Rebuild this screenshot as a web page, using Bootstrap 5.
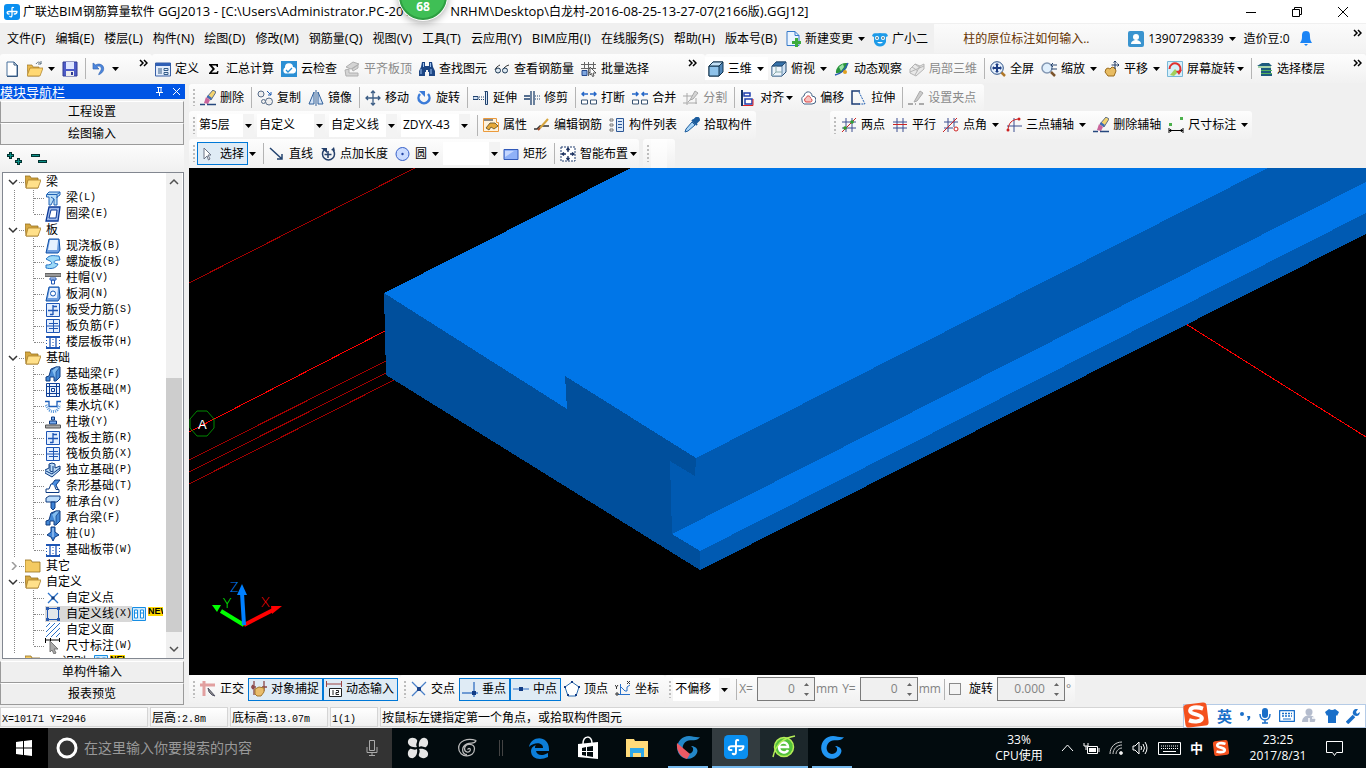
<!DOCTYPE html>
<html lang="zh-CN">
<head>
<meta charset="utf-8">
<meta name="viewport" content="width=device-width, initial-scale=1">
<title>广联达BIM钢筋算量软件 GGJ2013</title>
<link rel="stylesheet" href="https://cdn.jsdelivr.net/npm/bootstrap@5.3.0/dist/css/bootstrap.min.css">
<style>
body{font:12px/16px "Open Sans","Noto Sans CJK SC",sans-serif;color:#000;background:#f0f0f0;overflow:hidden}
button,select,input{font:inherit;color:inherit}
a{color:inherit;text-decoration:none}
.la{font-size:13px}
.ic{width:16px;height:16px;flex:none}
.arr{width:7px;height:4px;flex:none;margin-left:1px}
.arr.tight{margin-left:-2px}
.titlebar{height:23px;background:#fff;padding-left:4px}
.titlebar .ttl{padding-left:3px}
.titlebar .rest{margin-left:32px}
.winbtn{width:46px;border:0;background:none;padding:0}
.menurow{height:31px;padding-left:2px}
.menurow .mi{padding:0 5px}
.menurow .promo{width:188px;padding-left:29px;margin-left:2px;color:#663300;height:29px;background:linear-gradient(#fbfbfb,#f2f2f2)}
.menurow .acct{height:29px;background:linear-gradient(#fbfbfb,#f2f2f2);padding-left:3px}
.toprow{height:29px}
.bar{background:linear-gradient(#fdfdfd,#f1f1f1);border-radius:3px;display:flex;align-items:center;height:100%}
.bar.slim{padding-right:2px}
.tb{display:flex;align-items:center;gap:4px;border:0;background:none;padding:0 4px 0 3px;white-space:nowrap;height:23px;flex:none}
.tb.on{border:1px solid #0078d7;background:#dfebf5;padding:0 3px 0 2px}
.tb:disabled{color:#8a8a8a}
.sep{width:1px;height:21px;background:#b4b4b4;margin:0 2px 0 3px;flex:none}
.grip{width:2px;height:17px;margin:0 2px 0 4px;flex:none;background:repeating-linear-gradient(#bdbdbd 0 2px,transparent 2px 4px)}
.more{width:9px;height:8px;flex:none;margin-top:-12px}
.combo{border:0;border-radius:0;appearance:none;height:23px;padding:0 12px 0 2px;margin-right:4px;background:#fff url("data:image/svg+xml,%3Csvg xmlns='http://www.w3.org/2000/svg' width='11' height='23'%3E%3Cpath fill='%23f3f3f3' d='M0 0h11v23H0z'/%3E%3Cpath d='M2 10h7l-3.500 4z'/%3E%3C/svg%3E") right center no-repeat}
.w-a{width:57px;margin-right:3px}.w-b{width:68px}.w-c{width:69px}
.side{width:185px;flex:none;padding:1px 0 2px}
.side .cap{height:15px;background:#0055e5;color:#fff;font-size:13px;margin-bottom:2px}
.side .tab{height:22px;border:1px solid #9a9a9a;border-top-color:#fff;background:#efefef;width:184px;padding:0;display:block}
.side .tools{height:27px;background:linear-gradient(#fcfcfc,#f0f0f0);padding-left:7px;width:184px}
.treebox{border:1px solid #828790;background:#fff;margin:0 0 2px 2px;width:182px;min-height:0}
.tree,.tree ul{list-style:none;margin:0;padding:0}
.tree{padding-top:1px!important}
.tree li>.r{display:flex;align-items:center;height:16px;white-space:nowrap}
.tree .r .ic{margin-right:5px}
.tree .g>.r{padding-left:5px}
.tree .g>.r::before{content:"";width:5px;border-bottom:1px dotted #888;margin:0 1px 0 0}
.tree ul .r::before{content:"";width:10px;border-bottom:1px dotted #888;margin:0 1px 0 31px}
.tree ul{background:repeating-linear-gradient(#888 0 1px,transparent 1px 2px) 30px 0/1px calc(100% - 8px) no-repeat,repeating-linear-gradient(#888 0 1px,transparent 1px 2px) 11px 0/1px 100% no-repeat}
.chev{width:11px;height:8px;flex:none;order:-1}
.mo{font:10px/16px "Liberation Mono",monospace}
.picked{background:#d8d8d8}
.newtag{font:bold 9px/9px "Liberation Sans",sans-serif;background:#ffd800;height:9px;width:15px;overflow:hidden;margin:-6px 0 0 2px}
.sbar{width:16px;background:#f0f0f0;flex:none;margin-right:1px}
.sbar .thumb{background:#cdcdcd;flex:255}
.work{min-width:0;padding:1px 0 0 4px}
.view{background:#000;min-height:0}
.spin{border:1px solid #7a7a7a;height:24px;width:58px;background:#f0f0f0;color:#808080;margin-right:1px}
.spin.wide{width:68px}
.spin input{border:0;background:none;min-width:0;flex:1;text-align:right;padding:0 4px 0 0;color:#838383}
.spin button{border:0;background:none;padding:0;width:15px;height:10px;display:flex;align-items:center;justify-content:center}
.gt{color:#838383}
.tick{width:12px;height:12px;background-color:#f4f4f4;margin:0 8px 0 2px!important;border-color:#8a8a8a}
.stat{height:21px;gap:2px}
.stat>div{border:1px solid #d5d5d5;background:linear-gradient(#fff,#f0f0f0);padding:2px 1px 0;height:20px;white-space:nowrap}
.stat .s1{width:148px}.stat .s2{width:78px}.stat .s3{width:98px}.stat .s4{width:48px}
.task{height:40px;background:#020b0e;color:#fff}
.task button{border:0;background:none;padding:0;display:flex;align-items:center;justify-content:center;height:40px;color:#fff;flex:none}
.find{width:344px;background:#333;height:40px;padding:0 13px 0 7px}
.find input{background:none;border:0;color:#999;font-size:14px;flex:1;min-width:0;padding:0 5px}
.find input::placeholder{color:#999;opacity:1}
.task .run{border-bottom:2px solid #76b9ed}
.task .cur{background:#333c40}.task .alt{background:#1c272b}
.w40{width:40px}.w44{width:44px}.w46{width:46px}.w48{width:48px}.w52{width:52px}.w54{width:54px}.w64{width:64px}
.tray{gap:9px}
.ball{left:399px;top:-28px;width:48px;height:48px;border-radius:50%;background:#3fbf55;border:2px solid #2e9e42;box-shadow:0 0 0 1px #fff,0 2px 8px #0006;color:#fff;font:bold 12px/16px "Noto Sans",sans-serif;padding-top:25px}
.ime{right:0;bottom:40px;width:183px;height:24px;background:#fff;border:1px solid #b5cbe6}
.ime b{color:#1a6fc9;font-size:15px}
</style>
</head>
<body class="vh-100 d-flex flex-column">
<svg class="d-none" aria-hidden="true">
 <symbol id="dn" viewBox="0 0 7 4"><path d="M0 0h7L3.500 4z"/></symbol>
 <symbol id="mo" viewBox="0 0 9 8"><path d="M1 1l3 3-3 3M5 1l3 3-3 3" fill="none" stroke="#000" stroke-width="1.500"/></symbol>
 <symbol id="app" viewBox="0 0 16 16"><rect width="16" height="16" rx="3" fill="#0a8ff0"/><path d="M9.500 3.500C8 3 8 4 8 5v6c0 1.700-.7 2.200-2.200 1.500M13 7.500H5C2.500 7.500 2.500 10 5 10M13 7.500c0 1.700-1 2.500-2.700 2.500" fill="none" stroke="#fff" stroke-width="1.300" stroke-linecap="round"/></symbol>
 <symbol id="doc" viewBox="0 0 16 16"><path d="M3 1h7l3 3v11H3z" fill="#fff" stroke="#49709c"/><path d="M10 1v3h3M13.500 4v11.500H3" fill="none" stroke="#35577f"/></symbol>
 <symbol id="open" viewBox="0 0 16 16"><path d="M0 4h5l1 2h6v9H1z" fill="#e9b94d" stroke="#9c7426" stroke-width=".7"/><path d="M3 7h13l-3 8H0z" fill="#ffd873" stroke="#a97c22" stroke-width=".7"/><path d="M9 3c2-3 4-2 5 0m0-3v3h-3" fill="none" stroke="#5c7180"/></symbol>
 <symbol id="save" viewBox="0 0 16 16"><path d="M1 1h14v14H1z" fill="#4c5bc7" stroke="#303a92"/><path d="M4 1h8v7H4z" fill="#dfe6ff"/><path d="M4 10h8v5H4z" fill="#ececec"/><path d="M9 11h2v3H9z" fill="#303a92"/></symbol>
 <symbol id="undo" viewBox="0 0 16 16"><path d="M2 2v6h6L5.700 5.700c3-2 6 1 4 4-1 2-2 3-2 4 5-2 6-6 4-9-2-2-5-2-7-.7z" fill="#4d86dd" stroke="#3467b5" stroke-width=".7"/></symbol>
 <symbol id="def" viewBox="0 0 16 16"><path d="M.5 2h15v13H.5z" fill="#e4edfb" stroke="#375fa7"/><path d="M1 2h14v3H1z" fill="#2f5fb5"/><path d="M3 8h4M3 10h4M3 12h4M9 7.500h4v2H9zM9 11.500h4v2H9z" stroke="#355d88" fill="none"/></symbol>
 <symbol id="sum" viewBox="0 0 16 16"><path d="M3 3h9v3h-1l-1-1.500H6L9 8l-3.500 3.500H10.500l1-1.500h1L12 13H3v-1l3.500-4L3 4z"/></symbol>
 <symbol id="cloud" viewBox="0 0 16 16"><path d="M0 0h16v16H0z" fill="#2b8fd4"/><path d="M4 12.500a3.500 3.500 0 010-6 4 4 0 018-.5 3.300 3.300 0 01.5 6.500z" fill="#fff"/><path d="M5 9l2 2 4-4" fill="none" stroke="#2b8fd4" stroke-width="1.300"/></symbol>
 <symbol id="flat" viewBox="0 0 16 16"><path d="M2 6l7-5 6 2-8 5zM1 9l4-1v4h9v3H2zM8 8l6-4v3L9 10z" fill="#d4d4d4" stroke="#b0b0b0"/></symbol>
 <symbol id="bino" viewBox="0 0 16 16"><path d="M3 1h3v4h4V1h3l1 5 2 4v5h-6v-4H9V9H7v2H6v4H0v-5l2-4z" fill="#1d4684"/><path d="M2 8v5M12 8v5M4.500 2v4M11.500 2v4" stroke="#9cc1f0"/></symbol>
 <symbol id="glass" viewBox="0 0 16 16"><path d="M1 9c1-3 3-4 5-5M9 9c1-3 3-4 6-5" stroke="#333" fill="none"/><circle cx="4" cy="9.500" r="2.500" fill="#dde8f0" stroke="#1e3955"/><circle cx="11" cy="9.500" r="2.500" fill="#dde8f0" stroke="#1e3955"/></symbol>
 <symbol id="batch" viewBox="0 0 16 16"><path d="M0 3.500h15M0 7.500h15M7 11.500h3M3.500 1v7M7.500 1v14M12.500 1v6" stroke="#666"/><path d="M1 9.500h5v5H1z" fill="#7fa6de" stroke="#24488c"/><path d="M9 6l6 6h-3l1 3-1.500.5-1-3L9 14z" fill="#fff" stroke="#333" stroke-width=".8"/></symbol>
 <symbol id="cube" viewBox="0 0 16 16"><path d="M1 5l4-4h10v10l-4 4H1z" fill="#4f86b9" stroke="#12344e"/><path d="M1 5h10v10H1z" fill="#8fc3ea" stroke="#12344e"/><path d="M1 5l4-4h10l-4 4z" fill="#c4e1f6" stroke="#12344e"/></symbol>
 <symbol id="top3" viewBox="0 0 16 16"><path d="M1 5l4-4h10v10l-4 4H1z" fill="#cfe1f2" stroke="#254a70"/><path d="M1 5h10v10H1z" fill="#eef5fb" stroke="#6286aa"/><path d="M1 5l4-4h10l-4 4z" fill="#3570a8" stroke="#254a70"/><path d="M5 5v6h6M5 11l-4 4" stroke="#8aa" fill="none"/></symbol>
 <symbol id="orbit" viewBox="0 0 16 16"><path d="M2 12C1 7 7 1 13 2c2 5-4 11-11 10z" fill="#28953c"/><path d="M5 6l4-3 1 3-3 4z" fill="#9be1a5"/><path d="M1 14c5-1 10-5 13-12" stroke="#2b5bb0" stroke-width="1.500" fill="none"/><circle cx="11" cy="11" r="2" fill="#e0a020"/></symbol>
 <symbol id="part3" viewBox="0 0 16 16"><path d="M1 8l5-5 5 2 4-2v5l-8 7-6-3zM6 3l5 4M3 6l6 4M11 5l-5 9M1 11l14-6" fill="#e8e8e8" stroke="#b5b5b5"/></symbol>
 <symbol id="full" viewBox="0 0 16 16"><circle cx="7" cy="7" r="6.300" fill="#e6f0fb" stroke="#294f86"/><path d="M11.500 11.500L15 15" stroke="#b0782a" stroke-width="2.500"/><path d="M7 2l2 2H8v2h2V5l2 2-2 2V8H8v2h1l-2 2-2-2h1V8H4v1L2 7l2-2v1h2V4H5z" fill="#1e3f86"/></symbol>
 <symbol id="zoom" viewBox="0 0 16 16"><circle cx="6" cy="7" r="5" fill="#e0effc" stroke="#8397b2" stroke-width="1.500"/><path d="M10 11l4 4" stroke="#7b542c" stroke-width="2.500"/><path d="M10 4h6M12 2l-2 2 2 2M10 8h6" stroke="#26446e" fill="none"/></symbol>
 <symbol id="pan" viewBox="0 0 16 16"><path d="M2 8l2-1 2 1 2-2 3 1 1 3-2 5H4L1 11z" fill="#e8bc62" stroke="#9c6c1c"/><path d="M11 0v8M7.500 4h7M9.500 1.500L11 0l1.500 1.500M13.500 2.500L15 4l-1.500 1.500" stroke="#223c66" fill="none"/></symbol>
 <symbol id="rot" viewBox="0 0 16 16"><path d="M.5.5h15v15H.5z" fill="#d6f0fb" stroke="#78b8d8"/><path d="M3 14l5-6 3 3-4 4z" fill="#a2cf5b"/><path d="M2.500 8a5.500 5.500 0 1110 3" fill="none" stroke="#e03030" stroke-width="2"/><path d="M15 9l-3 5-3-4z" fill="#e03030"/></symbol>
 <symbol id="floors" viewBox="0 0 16 16"><path d="M0 5l5-3h7l3 3zM4 7h10v2H4zM4 10h10v2H4zM4 13h11v2H4z" fill="#1c5a7e"/><path d="M1 6h13M4 9.500h11M4 12.500h11" stroke="#54b05d"/></symbol>
 <symbol id="newc" viewBox="0 0 16 16"><path d="M2 .5h8l4 4v10H2z" fill="#eaf4ff" stroke="#3579c9"/><path d="M10 .5v4h4" fill="none" stroke="#3579c9"/><path d="M10 7h3v3h3v3h-3v3h-3v-3H7v-3h3z" fill="#3cac3c"/></symbol>
 <symbol id="owl" viewBox="0 0 16 16"><path d="M0 5c1-4 4-2 8-3 4 1 7-1 8 3l-2 1v5c-2 6-10 6-12 0V6z" fill="#1e9be8"/><circle cx="5" cy="7" r="2" fill="#fff"/><circle cx="11" cy="7" r="2" fill="#fff"/><path d="M4 7h2M10 7h2" stroke="#034"/><path d="M5 11c2 2 4 2 6 0z" fill="#fff"/></symbol>
 <symbol id="user" viewBox="0 0 16 16"><rect width="16" height="16" rx="2" fill="#3a94cf"/><circle cx="8" cy="6" r="3" fill="#fff"/><path d="M3 13c0-3 3-4 5-4s5 1 5 4z" fill="#fff"/></symbol>
 <symbol id="bell" viewBox="0 0 16 16"><path d="M8 0c4 0 4 3 4 6s1 4 2 6H2c1-2 2-3 2-6s0-6 4-6z" fill="#1b84f5"/><path d="M6 13h4l-2 2z" fill="#1b84f5"/></symbol>
 <symbol id="erase" viewBox="0 0 16 16"><path d="M7 7l6-7 3 2-5 8z" fill="#f3d36e" stroke="#385078" stroke-width=".8"/><path d="M8 5l4 3-1 2-4-3z" fill="#3d6cb8"/><path d="M6 7l4 3-2 4-4-1z" fill="#c9649b"/><path d="M0 14.500h5M7 14.500h9" stroke="#26477e" stroke-width="1.500"/></symbol>
 <symbol id="copy" viewBox="0 0 16 16"><g fill="#eee" stroke="#556b88"><circle cx="4" cy="4" r="3"/><circle cx="6.500" cy="11.500" r="2"/><circle cx="12" cy="11.500" r="3.500"/></g><path d="M10 1l4 4M14 2v3h-3" stroke="#1c5bb0" fill="none"/></symbol>
 <symbol id="mirror" viewBox="0 0 16 16"><path d="M6 2v12H1zM10 2v12h5z" fill="#d4e3f6" stroke="#31609a"/><path d="M8 0v16" stroke="#31609a"/></symbol>
 <symbol id="move" viewBox="0 0 16 16"><path d="M8 1v14M1 8h14M6 3l2-2 2 2M6 13l2 2 2-2M3 6L1 8l2 2M13 6l2 2-2 2" fill="none" stroke="#3c5d85" stroke-width="1.300"/></symbol>
 <symbol id="turn" viewBox="0 0 16 16"><path d="M4 4a5.500 5.500 0 108 0" fill="none" stroke="#3b7bd8" stroke-width="2.500"/><path d="M3 1h6v6z" fill="#3b7bd8"/></symbol>
 <symbol id="ext" viewBox="0 0 16 16"><path d="M0 6.500h5v3H0z" fill="#d4e3f6" stroke="#20426e"/><path d="M11.500 1.500h3v13h-2V2" fill="#d4e3f6" stroke="#20426e"/><path d="M6 7h6M6 9.500h6" stroke="#20426e" stroke-dasharray="1 1"/></symbol>
 <symbol id="trim" viewBox="0 0 16 16"><path d="M0 6h6M0 9h6M7 1v14M10 1v14" stroke="#20426e" stroke-width="1.300"/><path d="M11 6h5M11 9h5" stroke="#20426e" stroke-dasharray="1 1"/></symbol>
 <symbol id="brk" viewBox="0 0 16 16"><path d="M.5 10h6v4h-6zM9.500 10h6v4h-6z" fill="#fff" stroke="#3b5472"/><path d="M7 4H1m2-2L1 4l2 2M9 4h6m-2-2l2 2-2 2" stroke="#2567c8" stroke-width="1.500" fill="none"/></symbol>
 <symbol id="join" viewBox="0 0 16 16"><path d="M.5 10h6v4h-6zM9.500 10h6v4h-6z" fill="#fff" stroke="#3b5472"/><path d="M0 4h6M4 2l2 2-2 2M16 4h-6m2-2l-2 2 2 2" stroke="#2567c8" stroke-width="1.500" fill="none"/></symbol>
 <symbol id="cut" viewBox="0 0 16 16"><path d="M0 6h9M0 13h14M4 3v12M5 12l8-8M13 8v6" stroke="#aaa" fill="none"/><path d="M12 1l3 2-5 6-3 1z" fill="#d5d5d5" stroke="#aaa"/></symbol>
 <symbol id="align" viewBox="0 0 16 16"><path d="M2 0v16" stroke="#15356a" stroke-width="2"/><path d="M4 3h6v3H4zM5 9h7v5H5z" fill="#fff" stroke="#203fae" stroke-width="1.500"/><path d="M3 15.500h10V9" stroke="#d22" fill="none"/></symbol>
 <symbol id="off" viewBox="0 0 16 16"><path d="M2 10a3 3 0 012-4c1-6 8-5 8 0a4 4 0 010 8H4a4 4 0 01-2-4z" fill="#fff" stroke="#456285"/><path d="M4.500 10c0-2 2-2 2-3 1-2 4-1 4 1 2 1 2 4 0 4h-5z" fill="#f6c4c0" stroke="#d84040"/></symbol>
 <symbol id="stretch" viewBox="0 0 16 16"><path d="M9 1H1v13h8" fill="none" stroke="#1c3c74" stroke-width="1.500"/><path d="M8 2l6 12H8" fill="none" stroke="#1c5bb0" stroke-dasharray="2 1"/></symbol>
 <symbol id="gripset" viewBox="0 0 16 16"><path d="M0 14h5m6 0h5M7 14h1" stroke="#aaa" stroke-width="2"/><path d="M12 1l3 2-6 8-3 1z" fill="#ccc" stroke="#aaa"/></symbol>
 <symbol id="prop" viewBox="0 0 16 16"><path d="M.5 1.500h13v4h2v9H.5z" fill="#fff3dd" stroke="#eb9a3c"/><path d="M1 2h9v2H1z" fill="#888"/><path d="M3 11l4-5h5l3 3-4 3-3-2-2 3z" fill="#e6a93a" stroke="#5c4a20" stroke-width=".8"/></symbol>
 <symbol id="editr" viewBox="0 0 16 16"><path d="M0 12h3l3-3h9" fill="none" stroke="#333" stroke-width="1.500"/><path d="M6 11l8-9" stroke="#d6a53c" stroke-width="2"/><path d="M4 13l2-2" stroke="#a74a25" stroke-width="2"/></symbol>
 <symbol id="list" viewBox="0 0 16 16"><path d="M7.500 1.500h7v13h-7z" fill="#dce9f8" stroke="#2c5797"/><path d="M9 4.500h4M9 7.500h4M9 10.500h4" stroke="#2c5797"/><path d="M1 2h3v2H1zM1 7h3v2H1zM1 12h3v2H1z" fill="none" stroke="#777"/></symbol>
 <symbol id="pick" viewBox="0 0 16 16"><path d="M1 15l1-3 6-7 3 3-7 6z" fill="#a9d5f7" stroke="#1f5f9f"/><path d="M8 3l5 5M9 4l3-3q3-1 3 2l-3 3" fill="#1b5c9d" stroke="#1b5c9d" stroke-width="2"/></symbol>
 <symbol id="ax1" viewBox="0 0 16 16"><path d="M5 1v14M11 1v14M1 5h14M1 11h14" stroke="#3c4f90"/><path d="M1 15L15 1" stroke="#c22"/><circle cx="4" cy="11" r="1.800" fill="#2f9d2f"/><circle cx="11" cy="5" r="1.800" fill="#2f9d2f"/></symbol>
 <symbol id="ax2" viewBox="0 0 16 16"><path d="M5 1v14M11 1v14M1 5h14M1 11h14" stroke="#3c4f90"/><path d="M1 7.500h14" stroke="#c22"/></symbol>
 <symbol id="ax3" viewBox="0 0 16 16"><path d="M5 1v14M11 1v9M1 5h14M1 11h9" stroke="#3c4f90"/><path d="M0 15L14 1" stroke="#c22"/><circle cx="13" cy="12" r="2" fill="#fff" stroke="#c22"/></symbol>
 <symbol id="ax4" viewBox="0 0 16 16"><path d="M8 1v14M1 9h15" stroke="#3c4f90"/><path d="M2 14C2 6 6 2 14 2" fill="none" stroke="#c22"/><circle cx="2" cy="13" r="1.500" fill="#c22"/><circle cx="13" cy="2" r="1.500" fill="#c22"/></symbol>
 <symbol id="dim" viewBox="0 0 16 16"><path d="M1 6h3v3H1zM12 0h3v3h-3z" fill="#4bb04b"/><path d="M1 11v5M15 11v5M1 13.500h14M3 12l-1 1.500L3 15M13 12l1 1.500-1 1.500" stroke="#000" fill="none"/></symbol>
 <symbol id="cur" viewBox="0 0 16 16"><path d="M4 2l7 7H8l2 4-1.500 1L7 10l-3 3z" fill="#fff" stroke="#6c7486"/></symbol>
 <symbol id="line" viewBox="0 0 16 16"><path d="M1 2l12 11M13 8v5H8" stroke="#23436f" stroke-width="1.500" fill="none"/></symbol>
 <symbol id="ptlen" viewBox="0 0 16 16"><path d="M4 4a6 6 0 109 0M8 5v7M4.500 8.500h7" stroke="#25406b" stroke-width="1.500" fill="none"/><path d="M1 2h6v5zM15 5l-4-1 3-3z" fill="#25406b"/></symbol>
 <symbol id="circ" viewBox="0 0 16 16"><circle cx="7.500" cy="8" r="6.500" fill="#cbdcff" stroke="#3660c9"/><circle cx="7.500" cy="8" r="1.200" fill="#2345a5"/></symbol>
 <symbol id="rect" viewBox="0 0 16 16"><path d="M1 3.500h14v10H1z" fill="#8fb1f7" stroke="#3159b9"/><path d="M2 5h9L2 11z" fill="#c5d7ff"/></symbol>
 <symbol id="smart" viewBox="0 0 16 16"><path d="M1 1h14v14H1z" fill="#fff" stroke="#223f70" stroke-dasharray="2 1"/><path d="M8 2v4M6.500 4L8 2l1.500 2M8 10v4M6.500 12L8 14l1.500-2M2 8h4M4 6.500L2 8l2 1.500M10 8h4M12 6.500L14 8l-2 1.500" fill="none" stroke="#1d3260" stroke-width="1.300"/></symbol>
 <symbol id="ortho" viewBox="0 0 16 16"><path d="M4 0v15M0 4h15" stroke="#e2a0a0" stroke-width="3"/><path d="M8 7l7 8-3-1-3-3z" fill="#888" stroke="#556"/></symbol>
 <symbol id="snap" viewBox="0 0 16 16"><path d="M3 0v14M13 0v10M0 6h5M11 6h5M1 4l2 2-2 2" stroke="#8b4848" fill="none" stroke-width="1.300"/><path d="M4 8l4-2 5 1v4l-3 4H6l-2-2z" fill="#e9bd6c" stroke="#a3762c"/></symbol>
 <symbol id="dyn" viewBox="0 0 16 16"><path d="M.5 0v6M15.500 0v6M0 3h16" stroke="#9c4444"/><path d="M3.500 7.500h12v8h-12z" fill="#fff" stroke="#222"/><path d="M7 9v5M10 9.500h2.500v2H10v2h3" stroke="#222" fill="none"/></symbol>
 <symbol id="px" viewBox="0 0 16 16"><path d="M1 1l13 13M15 1L1 15" stroke="#4a80c8" stroke-width="1.300"/><path d="M6 6h4v4H6z" fill="#1c458c"/></symbol>
 <symbol id="pperp" viewBox="0 0 16 16"><path d="M0 12h16M12 1v15" stroke="#4a80c8" stroke-width="1.500"/><path d="M10 10h4v4h-4z" fill="#123c86"/></symbol>
 <symbol id="pmid" viewBox="0 0 16 16"><path d="M0 8h16" stroke="#6b98d4" stroke-width="1.500"/><path d="M6 6h4v4H6z" fill="#123c86"/></symbol>
 <symbol id="pvert" viewBox="0 0 16 16"><path d="M8 1l7 5-3 9H4L1 6z" fill="#fff" stroke="#2a6cb0"/><path d="M7 0h2v2H7zM0 5h2v2H0zM14 5h2v2h-2zM3 13h2v2H3zM11 13h2v2h-2z" fill="#123c86"/></symbol>
 <symbol id="pcoord" viewBox="0 0 16 16"><path d="M5.500 3v11M3 13.500h12M6 6l4 4h2V6l3-2" stroke="#2770ca" fill="none"/><path d="M0 4l1.500 2L3 4M1.500 6v2M12 0l3 3M15 0l-3 3M1 12h2v2H1z" stroke="#333" fill="none"/></symbol>
 <symbol id="fo" viewBox="0 0 16 16"><path d="M0 2h5l1 2h7v10H1z" fill="#d6a840" stroke="#95701f" stroke-width=".8"/><path d="M3 6h13l-3 8H1z" fill="#ffe08a" stroke="#a9802c" stroke-width=".8"/></symbol>
 <symbol id="fc" viewBox="0 0 16 16"><path d="M0 2h6l1 2h8v10H0z" fill="#f4ca62" stroke="#95701f" stroke-width=".8"/></symbol>
 <symbol id="t1" viewBox="0 0 16 16"><path d="M1.500 4.500L4 2h11v3l-3 2v8H9V9l-3 6H4V7H1.500z" fill="#b8dcf7" stroke="#2163b5"/><path d="M2 4.500h10L15 2M12 5v3M6 7l3 2" stroke="#2163b5" fill="none"/></symbol>
 <symbol id="t2" viewBox="0 0 16 16"><path d="M4 1h11l-2 14H1z" fill="#9db9ea" stroke="#0d3a98" stroke-width="1.300"/><path d="M6 4h6l-1 8H4z" fill="#fff" stroke="#0d3a98"/></symbol>
 <symbol id="t3" viewBox="0 0 16 16"><path d="M4 1h10l1 11-2 3H1z" fill="#6f9fe0" stroke="#0d4fa8"/><path d="M5 2h8l-1 10H3z" fill="#e6f1ff"/></symbol>
 <symbol id="t4" viewBox="0 0 16 16"><path d="M1 5c4-5 8-3 13-3l1 4c-6 0-9 3-2 4-2 5-8 5-12 4v-3c6 0 7-2 4-4z" fill="#9cd9f8" stroke="#2272c6"/></symbol>
 <symbol id="t5" viewBox="0 0 16 16"><path d="M0 3.500h16v3H0z" fill="#999" stroke="#666"/><path d="M5 8h6v2H5zM6.500 10h3v4h-3z" fill="#fff" stroke="#1d55b5"/></symbol>
 <symbol id="t6" viewBox="0 0 16 16"><path d="M4 1h10l1 11-2 3H1z" fill="#6f9fe0" stroke="#0d4fa8"/><path d="M5 2h8l-1 10H3z" fill="#e6f1ff"/><circle cx="8" cy="7.500" r="2.500" fill="#fff" stroke="#1557b5"/></symbol>
 <symbol id="t7" viewBox="0 0 16 16"><path d="M1.500 1.500h13v13h-13z" fill="#e3efff" stroke="#1d55b5"/><path d="M3 8.500h10M8 3v10M8 4.500h4M8 12.500H5" stroke="#1d55b5" stroke-width="1.300" fill="none"/></symbol>
 <symbol id="t8" viewBox="0 0 16 16"><path d="M1.500 1.500h13v13h-13z" fill="#e3efff" stroke="#1d55b5"/><path d="M4 5.500h9M4 10.500h9M8.500 2v12M2 8h12" stroke="#1d55b5"/></symbol>
 <symbol id="t9" viewBox="0 0 16 16"><path d="M1 3h14M1 14h14" stroke="#1d55b5" stroke-width="2"/><path d="M5 4v10M11 4v10" stroke="#1d55b5" stroke-width="1.300"/><path d="M1.500 6v7M8 5v8M14.500 6v7" stroke="#1d55b5" stroke-dasharray="1 2"/></symbol>
 <symbol id="t10" viewBox="0 0 16 16"><path d="M1 15V11l3-1 2-7 5-2h4v10l-4 4H9v-4H5v4z" fill="#4488d4" stroke="#0d3a80"/><path d="M7 4l4-3h4l-4 5v8" fill="#83bdf0" stroke="#0d3a80" stroke-width=".7"/></symbol>
 <symbol id="t11" viewBox="0 0 16 16"><path d="M1.500 1.500h13v13h-13zM4.500 1v14M11.500 1v14M1 4.500h14M1 11.500h14M6.500 6.500h3v3h-3z" fill="#d9e9fb" fill-opacity=".5" stroke="#0e3f97"/></symbol>
 <symbol id="t12" viewBox="0 0 16 16"><path d="M0 3.500h4v5h8v-5h4" fill="none" stroke="#1c5eb9" stroke-width="1.300"/><path d="M1 7l3 5c3 2 6 2 8 0l3-5" fill="none" stroke="#5a98db" stroke-dasharray="1 1" stroke-width="3"/></symbol>
 <symbol id="t13" viewBox="0 0 16 16"><path d="M6.500 3h3v3h-3zM4.500 7h7v3h-7z" fill="#7badf0" stroke="#0d3a80"/><path d="M.5 11h15v3H.5z" fill="#aaa" stroke="#555"/></symbol>
 <symbol id="t14" viewBox="0 0 16 16"><path d="M0 8l4-2V2l3-1 3 1v4l5-2v4l-8 7-7-4z" fill="#bcdcf8" stroke="#0d3a80"/><path d="M5 3v6l3 1V4M1 9l6 3 8-6" stroke="#0d3a80" fill="none"/></symbol>
 <symbol id="t15" viewBox="0 0 16 16"><path d="M1 14.500h13v-3h-3L9 6H6l-2 5H1z" fill="#fff" stroke="#0d3a80"/><path d="M7 6l3-4h5l-4 5 2 4" fill="#4a8ee0" stroke="#0d3a80"/></symbol>
 <symbol id="t16" viewBox="0 0 16 16"><path d="M1 4l3-2h11v3l-3 3H1z" fill="#bcdcfa" stroke="#0d3a80"/><path d="M6 8h4v6l-2 2-2-2z" fill="#3e83d6" stroke="#0d3a80"/></symbol>
 <symbol id="t17" viewBox="0 0 16 16"><path d="M6 1h4v5l4 3-4 2-2 4-2-4-4-2 4-3z" fill="#3e83d6" stroke="#0d3a80"/><path d="M8 2v9" stroke="#c7e0fb"/></symbol>
 <symbol id="t18" viewBox="0 0 16 16"><path d="M3 3l10 10M13 3L3 13" stroke="#2b72c8" stroke-width="1.300"/><path d="M6.500 6.500h3v3h-3z" fill="#0d3a80"/></symbol>
 <symbol id="t19" viewBox="0 0 16 16"><path d="M2.500 2.500h11v11h-11z" fill="#e3e6ea" stroke="#1d55b5"/><path d="M1 1h3v3H1zM12 1h3v3h-3zM1 12h3v3H1zM12 12h3v3h-3z" fill="#2d5cae"/></symbol>
 <symbol id="t20" viewBox="0 0 16 16"><path d="M1 5l4-4M1 10l9-9M1 15L15 1M6 15l9-9M11 15l4-4" stroke="#2b72c8"/></symbol>
 <symbol id="t21" viewBox="0 0 16 16"><path d="M.5 0v5M5.500 0v4M14.500 0v4M0 2h15" stroke="#000"/><path d="M5 3l8 8H9l2 4-2 1-2-4-2 2z" fill="#aaa" stroke="#777"/></symbol>
 <symbol id="tn" viewBox="0 0 14 14"><path d="M.5.5h13v13H.5z" fill="#cfeafd" stroke="#178de3"/><path d="M2.500 3h3v8h-3zM8.500 3h3v8h-3zM3 6h3M9 6h2" fill="#fff" stroke="#178de3"/></symbol>
 <symbol id="swirl" viewBox="0 0 24 24"><path d="M24 2c-3 5-9 2-13 4-6 3-6 12 1 13 5 0 7-6 3-8 3 0 8 2 6 7-3 7-14 8-18 1C-2 11 4 1 13 1c4 0 8 2 11 1z"/></symbol>
 <symbol id="sogou" viewBox="0 0 24 24"><rect x="2" y="2" width="20" height="20" rx="3" fill="#f4511e" transform="rotate(-7 12 12)"/><path d="M18 6.500C12 4.500 7 5.500 7 8.500s10 3 10 6-6 4-11 2" fill="none" stroke="#fff" stroke-width="3.500"/></symbol>
</svg>

<header class="flex-shrink-0">
 <div class="titlebar d-flex align-items-center">
  <svg class="ic"><use href="#app"/></svg>
  <span class="ttl flex-grow-1 text-nowrap">广联达<span class="la">BIM</span>钢筋算量软件<span class="la"> GGJ2013 - [C:\Users\Administrator.PC-2014</span><span class="la rest">NRHM\Desktop\</span>白龙村<span class="la">-2016-08-25-13-27-07(2166</span>版<span class="la">).GGJ12]</span></span>
  <button class="winbtn" aria-label="最小化"><svg width="10" height="10"><path d="M0 5.500h10" stroke="#000"/></svg></button>
  <button class="winbtn" aria-label="还原"><svg width="10" height="10" fill="none" stroke="#000"><path d="M.5 2.500h7v7h-7zM2.500 2V.5h7v7H8"/></svg></button>
  <button class="winbtn" aria-label="关闭"><svg width="10" height="10" stroke="#000"><path d="M0 0l10 10M10 0L0 10"/></svg></button>
 </div>
 <nav class="menurow d-flex align-items-center text-nowrap">
  <a class="mi" href="#">文件<span class="la">(F)</span></a><a class="mi" href="#">编辑<span class="la">(E)</span></a><a class="mi" href="#">楼层<span class="la">(L)</span></a><a class="mi" href="#">构件<span class="la">(N)</span></a><a class="mi" href="#">绘图<span class="la">(D)</span></a><a class="mi" href="#">修改<span class="la">(M)</span></a><a class="mi" href="#">钢筋量<span class="la">(Q)</span></a><a class="mi" href="#">视图<span class="la">(V)</span></a><a class="mi" href="#">工具<span class="la">(T)</span></a><a class="mi" href="#">云应用<span class="la">(Y)</span></a><a class="mi" href="#"><span class="la">BIM</span>应用<span class="la">(I)</span></a><a class="mi" href="#">在线服务<span class="la">(S)</span></a><a class="mi" href="#">帮助<span class="la">(H)</span></a><a class="mi" href="#">版本号<span class="la">(B)</span></a>
  <button class="tb"><svg class="ic"><use href="#newc"/></svg>新建变更<svg class="arr"><use href="#dn"/></svg></button>
  <button class="tb"><svg class="ic"><use href="#owl"/></svg>广小二</button>
  <a class="promo d-flex align-items-center" href="#">柱的原位标注如何输入..</a>
  <div class="acct d-flex align-items-center flex-grow-1 pe-1">
   <button class="tb"><svg class="ic"><use href="#user"/></svg>13907298339<svg class="arr"><use href="#dn"/></svg></button>
   <span class="px-1">造价豆:0</span><svg class="ic ms-1"><use href="#bell"/></svg>
   <svg class="more ms-auto"><use href="#mo"/></svg>
  </div>
 </nav>
 <div class="toprow d-flex">
  <div class="bar">
   <button class="tb ps-1" aria-label="新建"><svg class="ic"><use href="#doc"/></svg></button>
   <button class="tb" aria-label="打开"><svg class="ic"><use href="#open"/></svg><svg class="arr"><use href="#dn"/></svg></button>
   <button class="tb" aria-label="保存"><svg class="ic"><use href="#save"/></svg></button>
   <i class="sep"></i>
   <button class="tb" aria-label="撤销"><svg class="ic"><use href="#undo"/></svg><svg class="arr"><use href="#dn"/></svg></button>
   <svg class="more ms-3 me-1"><use href="#mo"/></svg>
  </div>
  <div class="bar flex-grow-1 pe-2">
   <button class="tb"><svg class="ic"><use href="#def"/></svg>定义</button>
   <button class="tb"><svg class="ic"><use href="#sum"/></svg>汇总计算</button>
   <button class="tb"><svg class="ic"><use href="#cloud"/></svg>云检查</button>
   <button class="tb" disabled><svg class="ic"><use href="#flat"/></svg>平齐板顶</button>
   <button class="tb"><svg class="ic"><use href="#bino"/></svg>查找图元</button>
   <button class="tb"><svg class="ic"><use href="#glass"/></svg>查看钢筋量</button>
   <button class="tb"><svg class="ic"><use href="#batch"/></svg>批量选择</button>
   <svg class="more ms-auto"><use href="#mo"/></svg>
  </div>
  <div class="bar">
   <button class="tb bg-white"><svg class="ic"><use href="#cube"/></svg>三维<svg class="arr"><use href="#dn"/></svg></button>
   <button class="tb"><svg class="ic"><use href="#top3"/></svg>俯视<svg class="arr"><use href="#dn"/></svg></button>
   <button class="tb"><svg class="ic"><use href="#orbit"/></svg>动态观察</button>
   <button class="tb" disabled><svg class="ic"><use href="#part3"/></svg>局部三维</button>
   <i class="sep"></i>
   <button class="tb"><svg class="ic"><use href="#full"/></svg>全屏</button>
   <button class="tb"><svg class="ic"><use href="#zoom"/></svg>缩放<svg class="arr"><use href="#dn"/></svg></button>
   <button class="tb"><svg class="ic"><use href="#pan"/></svg>平移<svg class="arr"><use href="#dn"/></svg></button>
   <button class="tb"><svg class="ic"><use href="#rot"/></svg>屏幕旋转<svg class="arr tight"><use href="#dn"/></svg></button>
   <i class="sep"></i>
   <button class="tb me-4"><svg class="ic"><use href="#floors"/></svg>选择楼层</button>
   <svg class="more me-1"><use href="#mo"/></svg>
  </div>
 </div>
</header>

<div class="d-flex flex-grow-1 overflow-hidden">
 <aside class="side d-flex flex-column">
  <div class="cap d-flex align-items-center flex-shrink-0"><span class="flex-grow-1">模块导航栏</span>
   <svg width="9" height="9" class="me-2"><path d="M2 .5h5M3.500 0v5M6 0v5M1 5.500h7M4.500 5v4" stroke="#fff"/></svg>
   <svg width="9" height="9" class="me-1"><path d="M1 1l7 7M8 1L1 8" stroke="#fff"/></svg></div>
  <button class="tab flex-shrink-0">工程设置</button>
  <button class="tab flex-shrink-0">绘图输入</button>
  <div class="tools flex-shrink-0 d-flex align-items-center gap-2">
   <svg width="16" height="16"><path d="M3.500 1v7M0 4.500h7M11.500 7v7M8 10.500h7" stroke="#03322f" stroke-width="3"/><path d="M3.500 2v5M1 4.500h5M11.500 8v5M9 10.500h5" stroke="#0a9088"/></svg>
   <svg width="16" height="16"><path d="M0 4.500h9M7 10.500h9" stroke="#03322f" stroke-width="3"/><path d="M1 4.500h7M8 10.500h7" stroke="#0a9088"/></svg></div>
  <div class="treebox flex-grow-1 d-flex">
   <ul class="tree flex-grow-1 overflow-hidden">
    <li class="g"><div class="r"><svg class="chev"><path d="M1 2l4 4 4-4" fill="none" stroke="#333" stroke-width="1.500"/></svg><svg class="ic"><use href="#fo"/></svg>梁</div>
     <ul><li><div class="r"><svg class="ic"><use href="#t1"/></svg>梁<span class="mo">(L)</span></div></li>
     <li><div class="r"><svg class="ic"><use href="#t2"/></svg>圈梁<span class="mo">(E)</span></div></li></ul></li>
    <li class="g"><div class="r"><svg class="chev"><path d="M1 2l4 4 4-4" fill="none" stroke="#333" stroke-width="1.500"/></svg><svg class="ic"><use href="#fo"/></svg>板</div>
     <ul><li><div class="r"><svg class="ic"><use href="#t3"/></svg>现浇板<span class="mo">(B)</span></div></li>
     <li><div class="r"><svg class="ic"><use href="#t4"/></svg>螺旋板<span class="mo">(B)</span></div></li>
     <li><div class="r"><svg class="ic"><use href="#t5"/></svg>柱帽<span class="mo">(V)</span></div></li>
     <li><div class="r"><svg class="ic"><use href="#t6"/></svg>板洞<span class="mo">(N)</span></div></li>
     <li><div class="r"><svg class="ic"><use href="#t7"/></svg>板受力筋<span class="mo">(S)</span></div></li>
     <li><div class="r"><svg class="ic"><use href="#t8"/></svg>板负筋<span class="mo">(F)</span></div></li>
     <li><div class="r"><svg class="ic"><use href="#t9"/></svg>楼层板带<span class="mo">(H)</span></div></li></ul></li>
    <li class="g"><div class="r"><svg class="chev"><path d="M1 2l4 4 4-4" fill="none" stroke="#333" stroke-width="1.500"/></svg><svg class="ic"><use href="#fo"/></svg>基础</div>
     <ul><li><div class="r"><svg class="ic"><use href="#t10"/></svg>基础梁<span class="mo">(F)</span></div></li>
     <li><div class="r"><svg class="ic"><use href="#t11"/></svg>筏板基础<span class="mo">(M)</span></div></li>
     <li><div class="r"><svg class="ic"><use href="#t12"/></svg>集水坑<span class="mo">(K)</span></div></li>
     <li><div class="r"><svg class="ic"><use href="#t13"/></svg>柱墩<span class="mo">(Y)</span></div></li>
     <li><div class="r"><svg class="ic"><use href="#t7"/></svg>筏板主筋<span class="mo">(R)</span></div></li>
     <li><div class="r"><svg class="ic"><use href="#t8"/></svg>筏板负筋<span class="mo">(X)</span></div></li>
     <li><div class="r"><svg class="ic"><use href="#t14"/></svg>独立基础<span class="mo">(P)</span></div></li>
     <li><div class="r"><svg class="ic"><use href="#t15"/></svg>条形基础<span class="mo">(T)</span></div></li>
     <li><div class="r"><svg class="ic"><use href="#t16"/></svg>桩承台<span class="mo">(V)</span></div></li>
     <li><div class="r"><svg class="ic"><use href="#t10"/></svg>承台梁<span class="mo">(F)</span></div></li>
     <li><div class="r"><svg class="ic"><use href="#t17"/></svg>桩<span class="mo">(U)</span></div></li>
     <li><div class="r"><svg class="ic"><use href="#t9"/></svg>基础板带<span class="mo">(W)</span></div></li></ul></li>
    <li class="g"><div class="r"><svg class="chev"><path d="M4 0l4 4-4 4" fill="none" stroke="#999" stroke-width="1.500"/></svg><svg class="ic"><use href="#fc"/></svg>其它</div></li>
    <li class="g"><div class="r"><svg class="chev"><path d="M1 2l4 4 4-4" fill="none" stroke="#333" stroke-width="1.500"/></svg><svg class="ic"><use href="#fo"/></svg>自定义</div>
     <ul><li><div class="r"><svg class="ic"><use href="#t18"/></svg>自定义点</div></li>
     <li><div class="r"><span class="picked d-flex"><svg class="ic"><use href="#t19"/></svg>自定义线<span class="mo">(X)</span></span><svg width="14" height="14" class="flex-shrink-0"><use href="#tn"/></svg><span class="newtag">NEW</span></div></li>
     <li><div class="r"><svg class="ic"><use href="#t20"/></svg>自定义面</div></li>
     <li><div class="r"><svg class="ic"><use href="#t21"/></svg>尺寸标注<span class="mo">(W)</span></div></li></ul></li>
    <li class="g"><div class="r"><svg class="chev"></svg><svg class="ic"><use href="#fc"/></svg><span class="ms-3">识别</span><svg width="14" height="14" class="ms-2 flex-shrink-0"><use href="#tn"/></svg><span class="newtag">NEW</span></div></li>
   </ul>
   <div class="sbar d-flex flex-column align-items-center">
    <svg width="16" height="18" class="flex-shrink-0"><path d="M4 11l4-4 4 4" fill="none" stroke="#505050" stroke-width="1.500"/></svg>
    <div style="flex:188"></div><div class="thumb w-100"></div><div style="flex:8"></div>
    <svg width="16" height="18" class="flex-shrink-0"><path d="M4 7l4 4 4-4" fill="none" stroke="#505050" stroke-width="1.500"/></svg>
   </div>
  </div>
  <button class="tab flex-shrink-0">单构件输入</button>
  <button class="tab flex-shrink-0">报表预览</button>
 </aside>

 <main class="work flex-grow-1 d-flex flex-column">
  <div class="d-flex" style="height:27px"><div class="bar pe-1"><i class="grip"></i>
   <button class="tb"><svg class="ic"><use href="#erase"/></svg>删除</button><i class="sep"></i>
   <button class="tb"><svg class="ic"><use href="#copy"/></svg>复制</button>
   <button class="tb"><svg class="ic"><use href="#mirror"/></svg>镜像</button><i class="sep"></i>
   <button class="tb"><svg class="ic"><use href="#move"/></svg>移动</button>
   <button class="tb"><svg class="ic"><use href="#turn"/></svg>旋转</button><i class="sep"></i>
   <button class="tb"><svg class="ic"><use href="#ext"/></svg>延伸</button>
   <button class="tb"><svg class="ic"><use href="#trim"/></svg>修剪</button><i class="sep"></i>
   <button class="tb"><svg class="ic"><use href="#brk"/></svg>打断</button>
   <button class="tb"><svg class="ic"><use href="#join"/></svg>合并</button>
   <button class="tb" disabled><svg class="ic"><use href="#cut"/></svg>分割</button><i class="sep"></i>
   <button class="tb"><svg class="ic"><use href="#align"/></svg>对齐<svg class="arr tight"><use href="#dn"/></svg></button>
   <button class="tb"><svg class="ic"><use href="#off"/></svg>偏移</button>
   <button class="tb"><svg class="ic"><use href="#stretch"/></svg>拉伸</button><i class="sep"></i>
   <button class="tb" disabled><svg class="ic"><use href="#gripset"/></svg>设置夹点</button></div></div>
  <div class="d-flex" style="height:28px"><div class="bar"><i class="grip"></i>
   <select class="combo w-a" aria-label="楼层"><option>第5层</option></select>
   <select class="combo w-b" aria-label="构件类型"><option>自定义</option></select>
   <select class="combo w-b" aria-label="构件"><option>自定义线</option></select>
   <select class="combo w-c" aria-label="名称"><option>ZDYX-43</option></select><i class="sep"></i>
   <button class="tb"><svg class="ic"><use href="#prop"/></svg>属性</button>
   <button class="tb"><svg class="ic"><use href="#editr"/></svg>编辑钢筋</button>
   <button class="tb"><svg class="ic"><use href="#list"/></svg>构件列表</button>
   <button class="tb"><svg class="ic"><use href="#pick"/></svg>拾取构件</button></div>
   <div class="flex-grow-1" style="max-width:74px"></div>
   <div class="bar"><i class="grip"></i>
   <button class="tb"><svg class="ic"><use href="#ax1"/></svg>两点</button>
   <button class="tb"><svg class="ic"><use href="#ax2"/></svg>平行</button>
   <button class="tb"><svg class="ic"><use href="#ax3"/></svg>点角<svg class="arr"><use href="#dn"/></svg></button>
   <button class="tb"><svg class="ic"><use href="#ax4"/></svg>三点辅轴<svg class="arr"><use href="#dn"/></svg></button>
   <button class="tb"><svg class="ic"><use href="#erase"/></svg>删除辅轴</button>
   <button class="tb"><svg class="ic"><use href="#dim"/></svg>尺寸标注<svg class="arr"><use href="#dn"/></svg></button></div></div>
  <div class="d-flex gap-1" style="height:29px"><div class="bar slim"><i class="grip"></i>
   <button class="tb on"><svg class="ic"><use href="#cur"/></svg>选择</button>
   <button class="tb ps-0" aria-label="选择方式"><svg class="arr"><use href="#dn"/></svg></button><i class="sep"></i>
   <button class="tb"><svg class="ic"><use href="#line"/></svg>直线</button>
   <button class="tb"><svg class="ic"><use href="#ptlen"/></svg>点加长度</button>
   <button class="tb"><svg class="ic"><use href="#circ"/></svg>圆<svg class="arr"><use href="#dn"/></svg></button>
   <select class="combo w-a" aria-label="画法"><option></option></select>
   <button class="tb ps-0"><svg class="ic"><use href="#rect"/></svg>矩形</button><i class="sep"></i>
   <button class="tb pe-0"><svg class="ic"><use href="#smart"/></svg>智能布置<svg class="arr tight"><use href="#dn"/></svg></button></div>
   <div class="bar"><i class="grip"></i><span class="bg-white h-100 opacity-50 px-2 me-2"></span></div></div>

  <div class="view flex-grow-1">
   <svg class="w-100 h-100 d-block" viewBox="189 168 1177 507" preserveAspectRatio="xMinYMin slice">
    <g stroke="#a00000" shape-rendering="crispEdges"><path d="M189 283L415 168M189 460L386 361M189 472L388 372M189 484L394 380"/><path d="M189 432L385 331M1186 324L1366 437" stroke="#f00"/></g>
    <g shape-rendering="crispEdges">
    <path d="M384 293L631 168H1268L696 458 565 376 567 409z" fill="#0076e8"/>
    <path d="M384 293L567 409 565 376 696 458 695 476 670 461 672 534 700 551V570L386 375z" fill="#004f9c"/>
    <path d="M696 458L1268 168H1366V182L672 534 670 461 695 476z" fill="#005ab2"/>
    <path d="M672 534L1366 182V213L700 551z" fill="#0076e8"/>
    <path d="M700 551L1366 213V234L700 570z" fill="#005ab2"/></g>
    <path d="M197 411h10l7 8v9l-7 8h-10l-7-8v-9z" fill="none" stroke="#008800"/>
    <text x="198" y="429" font-family="Liberation Sans" font-size="13" fill="#fff">A</text>
    <g stroke-width="4"><path d="M244 625L221 611" stroke="#0f0"/><path d="M244 625L273 610" stroke="#f00"/><path d="M244 625L242 593" stroke="#0080ff"/></g>
    <path d="M212 605l9 0-4 7z" fill="#0f0"/><path d="M282 606l-10 8-1-8z" fill="#f00"/><path d="M242 584l5 11h-10z" fill="#0080ff"/>
    <g font-family="Lato" font-weight="300" font-size="14"><text x="223" y="608" fill="#0f0">Y</text><text x="261" y="607" fill="#f00">X</text><text x="230" y="592" fill="#0080ff">Z</text></g>
   </svg>
  </div>

  <div class="d-flex pb-1" style="height:32px"><div class="bar slim"><i class="grip"></i>
   <button class="tb"><svg class="ic"><use href="#ortho"/></svg>正交</button>
   <button class="tb on"><svg class="ic"><use href="#snap"/></svg>对象捕捉</button>
   <button class="tb on"><svg class="ic"><use href="#dyn"/></svg>动态输入</button></div>
   <div class="bar slim"><i class="grip"></i>
   <button class="tb"><svg class="ic"><use href="#px"/></svg>交点</button>
   <button class="tb on"><svg class="ic"><use href="#pperp"/></svg>垂点</button>
   <button class="tb on"><svg class="ic"><use href="#pmid"/></svg>中点</button>
   <button class="tb"><svg class="ic"><use href="#pvert"/></svg>顶点</button>
   <button class="tb"><svg class="ic"><use href="#pcoord"/></svg>坐标</button></div>
   <div class="bar pe-1"><i class="grip"></i>
   <select class="combo w-a" aria-label="偏移方式"><option>不偏移</option></select><i class="sep"></i>
   <label class="gt me-1" for="ox">X=</label><div class="spin d-flex align-items-center"><input id="ox" value="0"><div><button aria-label="增加"><svg width="5" height="3"><path d="M0 3h5L2.500 0z" fill="#666"/></svg></button><button aria-label="减少"><svg width="5" height="3"><path d="M0 0h5L2.500 3z" fill="#666"/></svg></button></div></div><span class="gt me-1">mm</span>
   <label class="gt me-1" for="oy">Y=</label><div class="spin d-flex align-items-center"><input id="oy" value="0"><div><button aria-label="增加"><svg width="5" height="3"><path d="M0 3h5L2.500 0z" fill="#666"/></svg></button><button aria-label="减少"><svg width="5" height="3"><path d="M0 0h5L2.500 3z" fill="#666"/></svg></button></div></div><span class="gt">mm</span><i class="sep"></i>
   <input class="form-check-input tick rounded-0" type="checkbox" id="ro"><label class="me-1" for="ro">旋转</label>
   <div class="spin wide d-flex align-items-center"><input value="0.000" aria-label="旋转角度"><div><button aria-label="增加"><svg width="5" height="3"><path d="M0 3h5L2.500 0z" fill="#666"/></svg></button><button aria-label="减少"><svg width="5" height="3"><path d="M0 0h5L2.500 3z" fill="#666"/></svg></button></div></div><span class="gt">°</span></div></div>
 </main>
</div>

<div class="stat d-flex flex-shrink-0">
 <div class="s1"><span class="mo">X=10171 Y=2946</span></div>
 <div class="s2">层高<span class="mo">:2.8m</span></div>
 <div class="s3">底标高<span class="mo">:13.07m</span></div>
 <div class="s4"><span class="mo">1(1)</span></div>
 <div class="flex-grow-1">按鼠标左键指定第一个角点，或拾取构件图元</div>
</div>

<footer class="task d-flex align-items-center flex-shrink-0">
 <button class="bg-black w48" aria-label="开始"><svg width="16" height="16" fill="#fff"><path d="M0 2l7-1v6.500H0zM8 1l8-1v7.500H8zM0 8.500h7V15l-7-1zM8 8.500h8V16l-8-1z"/></svg></button>
 <div class="find d-flex align-items-center"><svg width="24" height="24"><circle cx="12" cy="12" r="9" fill="none" stroke="#fff" stroke-width="3"/></svg>
  <input placeholder="在这里输入你要搜索的内容" aria-label="搜索">
  <svg width="14" height="18" fill="none" stroke="#aaa"><path d="M4.500 1.500h5v10h-5zM2 8v5.500h10V8M7 14v3M4 16.500h6"/></svg></div>
 <button class="w52" aria-label="应用"><svg width="22" height="22"><g fill="#e6e6e6"><path d="M10 10C5 11 0 8 1 4c1-4 7-4 9-1 1 2-2 4 0 7z"/><path d="M12 10C11 5 14 0 18 1c4 1 4 7 1 9-2 1-4-2-7 0z"/><path d="M12 12c5-1 10 2 9 6-1 4-7 4-9 1-1-2 2-4 0-7z"/><path d="M10 12c1 5-2 10-6 9-4-1-4-7-1-9 2-1 4 2 7 0z"/></g></svg></button>
 <button class="w46" aria-label="旋风"><svg width="20" height="20" viewBox="0 0 24 24" fill="none" stroke="#bbb" stroke-width="1.500"><path d="M23 3C12-1 2 4 2 12c0 12 19 13 19 1 0-6-11-8-12 0 0 5 7 5 7 1 0-2-3-2-3 0M23 3c-2 5-6 2-11 4-7 3-7 12 0 13"/></svg></button>
 <span class="text-center px-2"><svg width="6" height="16"><path d="M1.500 0v16M4.500 0v16" stroke="#444"/></svg></span>
 <button class="w54" aria-label="Edge"><svg width="20" height="21" viewBox="0 0 20 21"><path d="M0 9C2-3 20-3 20 11v2H7c1 5 7 5 12 2v4C11 23 2 21 2 13c0-3 2-5 5-6-1 1-1 2-1 3h8C14 4 5 4 0 9z" fill="#0c7ed9"/></svg></button>
 <button class="w44" aria-label="应用商店"><svg width="22" height="24"><path d="M1 8l20-2v17L1 21z" fill="#fff"/><path d="M6 8c0-9 9-9 9-1" fill="none" stroke="#fff" stroke-width="1.500"/><path d="M5 12l4-1v4H5zM10 11l6-1v5h-6zM5 16h4v4l-4-1zM10 16h6v5l-6-1z" fill="#020b0e"/></svg></button>
 <button class="w54" aria-label="文件资源管理器"><svg width="22" height="20"><path d="M0 1h8l1 2h13v16H0z" fill="#ffdb7a"/><path d="M4 10h14v9h-3v-4H7v4H4z" fill="#2ea7e8"/></svg></button>
 <button class="run w40 mx-1" aria-label="广联达"><svg width="24" height="24"><use href="#swirl" fill="#2387c8"/><path d="M1 8l13 11-3 5C4 22 0 15 1 8z" fill="#ee5a64"/></svg></button>
 <button class="run cur w48" aria-label="钢筋算量"><svg width="24" height="24"><use href="#app"/></svg></button>
 <button class="run alt w48" aria-label="浏览器"><svg width="24" height="24"><circle cx="12" cy="12" r="9.500" fill="#54c13c" stroke="#b5ee58" stroke-width="1.500"/><path d="M16 15c-2 4-9 3-9-3s9-6 9 0H8" fill="none" stroke="#fff" stroke-width="2.500"/><path d="M1 22C4 8 12 3 23 1" fill="none" stroke="#b5ee58" stroke-width="1.500"/></svg></button>
 <button class="run w40 ms-1" aria-label="广联达云"><svg width="24" height="24"><use href="#swirl" fill="#2196f3"/></svg></button>
 <div class="ms-auto text-center me-3 w52">33%<br>CPU使用</div>
 <div class="tray d-flex align-items-center me-3">
  <svg width="13" height="8"><path d="M1 7l5.500-6L12 7" fill="none" stroke="#fff"/></svg>
  <svg width="17" height="13"><path d="M4.500 4.500h10v7h-10zM16 6v4M1 1v3h4V1M3 4v4" fill="none" stroke="#fff"/><path d="M6 6h7v4H6z" fill="#fff"/></svg>
  <svg width="14" height="14" fill="none" stroke="#ccc"><path d="M1 13C1 6 6 1 13 1M4 13c0-5 4-9 9-9M7 13c0-3 3-6 6-6"/><circle cx="12" cy="12" r="1.500" fill="#fff"/></svg>
  <svg width="17" height="14" fill="none" stroke="#fff"><path d="M1 5h2l4-4v12L3 9H1zM9 5q1 2 0 4M11 3q3 4 0 8M13 1q4 6 0 12"/></svg>
  <svg width="23" height="13" stroke="#fff" fill="none"><path d="M.5.5h22v12H.5z"/><path d="M3 4h17M3 6.500h17" stroke-dasharray="1 1"/><path d="M5 9.500h13"/></svg>
  <span class="fw-bold la">中</span>
  <svg width="18" height="18"><use href="#sogou"/></svg>
 </div>
 <div class="text-center w64">23:25<br>2017/8/31</div>
 <button class="w48 me-2" aria-label="通知"><svg width="17" height="17"><path d="M.5 1.500h16v11h-6l-2 3-2-3h-6z" fill="none" stroke="#fff"/></svg></button>
</footer>

<div class="ball position-absolute text-center">68</div>
<div class="ime position-absolute d-flex align-items-center justify-content-between pe-1">
 <svg width="28" height="28" style="margin:-2px 0 0 -2px"><use href="#sogou"/></svg><b>英</b>
 <svg width="12" height="12" fill="#1a6fc9"><circle cx="3" cy="4" r="2"/><path d="M8 6h3c1 2-1 5-3 5l1-2z"/></svg>
 <svg width="14" height="16"><rect x="4" width="6" height="10" rx="3" fill="#1a6fc9"/><path d="M2 6c0 8 10 8 10 0M7 12v3M4 15h6" fill="none" stroke="#1a6fc9" stroke-width="1.500"/></svg>
 <svg width="16" height="12"><rect x=".5" y=".5" width="15" height="11" rx="1" fill="#fff" stroke="#1a6fc9" stroke-width="1.500"/><path d="M3 3.500h10M3 6h10" stroke="#1a6fc9" stroke-dasharray="2 1" stroke-width="1.500"/><path d="M4 9h8" stroke="#1a6fc9"/></svg>
 <svg width="16" height="16" fill="#b4bccd"><circle cx="7" cy="4" r="3.500"/><path d="M0 14c0-9 14-9 14 0z"/><path d="M7 10v5M10 10h5l-2 5" stroke="#fff" stroke-width="1.500" fill="none"/></svg>
 <svg width="14" height="14" fill="#1a6fc9"><path d="M4 0q3 2 6 0l4 3-2 4-1-1v8H3V6L2 7 0 3z"/></svg>
 <svg width="15" height="15"><path d="M1 14l7-7" stroke="#1a6fc9" stroke-width="3.500"/><path d="M14 3l-3 2-1-2 2-3c-4-1-6 3-5 5s6 4 7-2z" fill="#1a6fc9"/></svg>
</div>
<script src="https://cdn.jsdelivr.net/npm/bootstrap@5.3.0/dist/js/bootstrap.bundle.min.js"></script>
</body>
</html>
